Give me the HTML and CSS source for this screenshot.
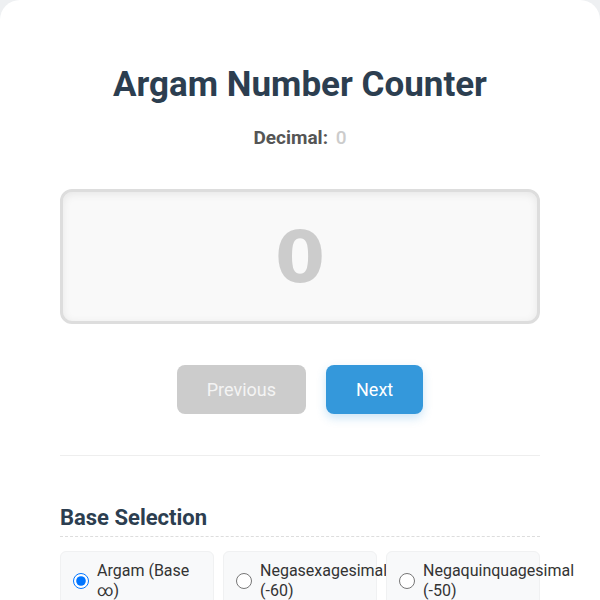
FILE: index.html
```html
<!DOCTYPE html>
<html>
<head>
<meta charset="utf-8">
<link rel="stylesheet" href="styles.css">
</head>
<body>
<div class="card">
  <h1 class="title">Argam Number Counter</h1>
  <div class="decimal"><span class="dec-label">Decimal:</span> <span class="dec-value">0</span></div>
  <div class="display"><span class="digit">0</span></div>
  <div class="buttons">
    <button class="btn btn-prev">Previous</button>
    <button class="btn btn-next">Next</button>
  </div>
  <hr class="divider">
  <h2 class="section-title">Base Selection</h2>
  <div class="options">
    <label class="option"><input type="radio" name="base" checked><span>Argam (Base ∞)</span></label>
    <label class="option"><input type="radio" name="base"><span>Negasexagesimal (-60)</span></label>
    <label class="option"><input type="radio" name="base"><span>Negaquinquagesimal (-50)</span></label>
  </div>
</div>
</body>
</html>
```
FILE: styles.css
```css
html, body {
  margin: 0;
  padding: 0;
  background: #eef0f2;
  font-family: Roboto, "Liberation Sans", sans-serif;
}
.card {
  background: #ffffff;
  border-radius: 20px;
  padding: 64px 60px 40px;
  min-height: 600px;
  box-sizing: border-box;
}
.title {
  margin: 0;
  text-align: center;
  font-size: 35px;
  font-weight: 700;
  color: #2c3e50;
  line-height: 41px;
}
.decimal {
  margin-top: 21px;
  text-align: center;
  font-size: 19px;
  line-height: 24px;
  font-weight: 700;
}
.dec-label { color: #555555; margin-right: 3px; }
.dec-value { color: #cccccc; font-weight: 500; }
.display {
  margin-top: 39px;
  height: 135px;
  box-sizing: border-box;
  border: 3px solid #dddddd;
  border-radius: 12px;
  background: #f9f9f9;
  box-shadow: inset 0 2px 8px rgba(0,0,0,0.08);
  display: flex;
  align-items: center;
  justify-content: center;
}
.digit {
  font-family: "DejaVu Sans", sans-serif;
  font-weight: 700;
  font-size: 72px;
  color: #cccccc;
  line-height: 1;
}
.buttons {
  margin-top: 41px;
  display: flex;
  justify-content: center;
  gap: 20px;
}
.btn {
  border: none;
  border-radius: 8px;
  font-family: Roboto, "Liberation Sans", sans-serif;
  font-size: 18px;
  line-height: 19px;
  padding: 15px 30px;
  color: #ffffff;
}
.btn-prev {
  background: #cccccc;
  color: #f4f4f4;
}
.btn-next {
  background: #3498db;
  box-shadow: 0 4px 10px rgba(52,152,219,0.25);
}
.divider {
  margin: 41px 0 0;
  border: none;
  border-top: 1px solid #eeeeee;
}
.section-title {
  margin: 48px 0 0;
  font-size: 22px;
  line-height: 28px;
  font-weight: 700;
  color: #2c3e50;
  padding-bottom: 4px;
  border-bottom: 1px dashed #dddddd;
}
.options {
  margin-top: 14px;
  display: grid;
  grid-template-columns: repeat(3, minmax(0, 1fr));
  gap: 9px;
}
.option {
  background: #f8f9fa;
  border-radius: 6px;
  padding: 9px 12px;
  display: flex;
  align-items: center;
  gap: 8px;
  font-size: 16px;
  line-height: 20px;
  color: #333333;
  border: 1px solid #f0f1f2;
  min-width: 0;
}
.option span {
  min-width: 0;
}
.option input {
  margin: 0;
  width: 16px;
  height: 16px;
  flex: none;
}
```
